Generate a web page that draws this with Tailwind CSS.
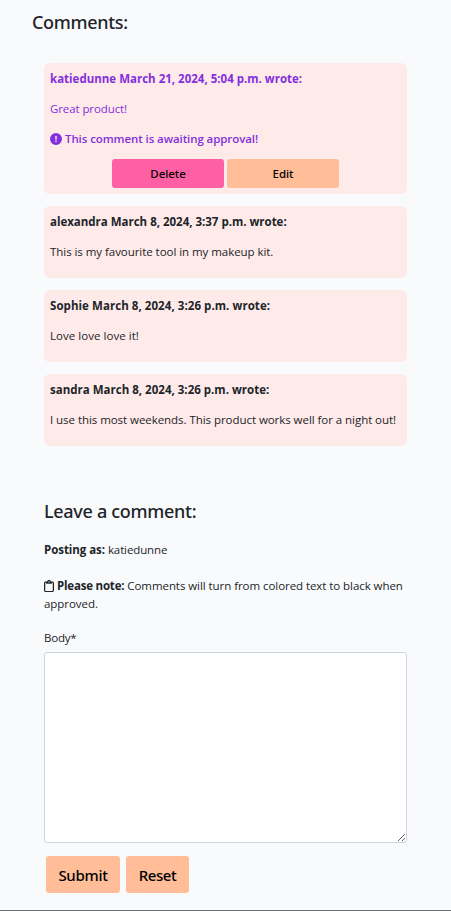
<!DOCTYPE html>
<html lang="en">
<head>
<meta charset="utf-8">
<title>Comments</title>
<script src="https://cdn.jsdelivr.net/npm/@tailwindcss/browser@4"></script>
</head>
<body class="bg-[#f9fafc] text-[#212529] font-['Open_Sans','Noto_Sans',sans-serif] text-[11.5px] leading-[18px] tracking-[-0.05px]">
<main class="h-[911px] overflow-hidden border-b border-[#6b6c6e] px-8 pt-[11px]">
  <h2 class="font-['Noto_Sans',sans-serif] text-[18px] leading-[22px] font-medium tracking-[-0.33px]">Comments:</h2>
  <section class="mt-[30px] px-3 flex flex-col gap-3">
    <article class="h-[131px] rounded-md bg-[#ffeaea] px-1.5 pt-[7px] text-[#8230dd]">
      <p class="font-bold tracking-[0.005px]">katiedunne March 21, 2024, 5:04 p.m. wrote:</p>
      <p class="mt-3 tracking-[-0.1px]">Great product!</p>
      <p class="mt-3 flex items-center gap-[3px] font-semibold tracking-[-0.09px]">
        <svg class="size-3" viewBox="0 0 512 512" fill="currentColor"><path d="M256 512A256 256 0 1 0 256 0a256 256 0 1 0 0 512zm0-400c17 0 30 12 30 28V264c0 16-13 28-30 28s-30-12-30-28V140c0-16 13-28 30-28zM220 356a36 36 0 1 1 72 0 36 36 0 1 1-72 0z"/></svg>
        <span>This comment is awaiting approval!</span></p>
      <div class="mt-[11px] flex justify-center gap-[3px] font-['Noto_Sans',sans-serif] font-medium text-black">
        <button class="h-[29px] w-28 rounded-[3px] bg-[#ff60a5]">Delete</button>
        <button class="h-[29px] w-28 rounded-[3px] bg-[#ffbd98]">Edit</button>
      </div>
    </article>
    <article class="h-[72px] rounded-md bg-[#ffeaea] px-1.5 pt-[7px]">
      <p class="font-bold tracking-[-0.01px]">alexandra March 8, 2024, 3:37 p.m. wrote:</p>
      <p class="mt-3">This is my favourite tool in my makeup kit.</p>
    </article>
    <article class="h-[72px] rounded-md bg-[#ffeaea] px-1.5 pt-[7px]">
      <p class="font-bold tracking-[0.06px]">Sophie March 8, 2024, 3:26 p.m. wrote:</p>
      <p class="mt-3 tracking-[0.04px]">Love love love it!</p>
    </article>
    <article class="h-[72px] rounded-md bg-[#ffeaea] px-1.5 pt-[7px]">
      <p class="font-bold tracking-[0.01px]">sandra March 8, 2024, 3:26 p.m. wrote:</p>
      <p class="mt-3 whitespace-nowrap">I use this most weekends. This product works well for a night out!</p>
    </article>
  </section>
  <section class="mt-[54px] px-3">
    <h2 class="font-['Noto_Sans',sans-serif] text-[18px] leading-[22px] font-medium tracking-[-0.3px]">Leave a comment:</h2>
    <p class="mt-[19px]"><span class="font-bold">Posting as:</span> <span class="tracking-[-0.12px]">katiedunne</span></p>
    <p class="mt-[18px] whitespace-nowrap"><svg class="mr-[3px] inline-block h-3 w-[10px] align-[-2px]" viewBox="0 0 384 512" preserveAspectRatio="none" fill="currentColor"><path d="M280 64h40c35.300 0 64 28.700 64 64v320c0 35.300-28.700 64-64 64H64c-35.300 0-64-28.700-64-64V128c0-35.300 28.700-64 64-64h49.600C121 27.500 153.300 0 192 0s71 27.500 78.400 64H280zM64 112c-8.800 0-16 7.200-16 16v320c0 8.800 7.200 16 16 16h256c8.800 0 16-7.200 16-16V128c0-8.800-7.200-16-16-16h-16v24c0 13.300-10.700 24-24 24H104c-13.300 0-24-10.700-24-24v-24H64zm128-8a24 24 0 1 0 0-48 24 24 0 1 0 0 48z"/></svg><span class="font-bold tracking-[-0.2px]">Please note:</span> <span class="tracking-[-0.06px]">Comments will turn from colored text to black when</span><br>approved.</p>
    <form class="mt-4">
      <label class="block tracking-[-0.2px]" for="body">Body*</label>
      <textarea id="body" class="mt-[5px] block h-[191px] w-full rounded-[3px] border border-[#ced4da] bg-white p-2"></textarea>
      <div class="mt-[13px] ml-0.5 flex gap-1.5 font-['Noto_Sans',sans-serif] text-[15px] font-medium text-black">
        <button type="button" class="h-[37px] w-[74px] rounded-[3px] bg-[#ffbd98] tracking-[-0.3px]">Submit</button>
        <button type="button" class="h-[37px] w-[63px] rounded-[3px] bg-[#ffbd98] tracking-[-0.4px]">Reset</button>
      </div>
    </form>
  </section>
</main>
</body>
</html>
